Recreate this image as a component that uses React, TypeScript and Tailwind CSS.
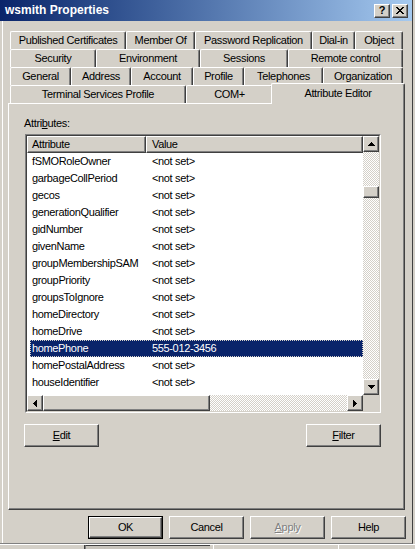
import React from "react";

type Tab = { label: string; w: string; selected?: boolean };

const tabRows: Tab[][] = [
  [
    { label: "Published Certificates", w: "w-[116px]" },
    { label: "Member Of", w: "w-[69px]" },
    { label: "Password Replication", w: "w-[117px]" },
    { label: "Dial-in", w: "w-[43px]" },
    { label: "Object", w: "w-[48px]" },
  ],
  [
    { label: "Security", w: "w-[86px]" },
    { label: "Environment", w: "w-[104px]" },
    { label: "Sessions", w: "w-[88px]" },
    { label: "Remote control", w: "w-[115px]" },
  ],
  [
    { label: "General", w: "w-[61px]" },
    { label: "Address", w: "w-[60px]" },
    { label: "Account", w: "w-[62px]" },
    { label: "Profile", w: "w-[51px]" },
    { label: "Telephones", w: "w-[79px]" },
    { label: "Organization", w: "w-[80px]" },
  ],
  [
    { label: "Terminal Services Profile", w: "w-[176px]" },
    { label: "COM+", w: "w-[87px]" },
    { label: "Attribute Editor", w: "w-[134px]", selected: true },
  ],
];

const attributes: [string, string][] = [
  ["fSMORoleOwner", "<not set>"],
  ["garbageCollPeriod", "<not set>"],
  ["gecos", "<not set>"],
  ["generationQualifier", "<not set>"],
  ["gidNumber", "<not set>"],
  ["givenName", "<not set>"],
  ["groupMembershipSAM", "<not set>"],
  ["groupPriority", "<not set>"],
  ["groupsToIgnore", "<not set>"],
  ["homeDirectory", "<not set>"],
  ["homeDrive", "<not set>"],
  ["homePhone", "555-012-3456"],
  ["homePostalAddress", "<not set>"],
  ["houseIdentifier", "<not set>"],
];

const raised =
  "border border-t-white border-l-white border-r-[#404040] border-b-[#404040] shadow-[inset_-1px_-1px_#808080]";

const dither =
  "bg-[repeating-conic-gradient(#d4d0c8_0%_25%,#ffffff_0%_50%)] bg-[length:2px_2px]";

function Arrow({ dir }: { dir: "up" | "down" | "left" | "right" }) {
  const paths = {
    up: "M3 0h1v1H3z M2 1h3v1H2z M1 2h5v1H1z M0 3h7v1H0z",
    down: "M0 0h7v1H0z M1 1h5v1H1z M2 2h3v1H2z M3 3h1v1H3z",
    left: "M3 0h1v7H3z M2 1h1v5H2z M1 2h1v3H1z M0 3h1v1H0z",
    right: "M0 0h1v7H0z M1 1h1v5H1z M2 2h1v3H2z M3 3h1v1H3z",
  };
  const horiz = dir === "up" || dir === "down";
  return (
    <svg
      width={horiz ? 7 : 4}
      height={horiz ? 4 : 7}
      shapeRendering="crispEdges"
    >
      <path d={paths[dir]} fill="#000" />
    </svg>
  );
}

function ScrollButton({ dir }: { dir: "up" | "down" | "left" | "right" }) {
  return (
    <div
      className={`${raised} flex h-[16px] w-[16px] shrink-0 items-center justify-center bg-[#d4d0c8]`}
    >
      <Arrow dir={dir} />
    </div>
  );
}

function PushButton({
  children,
  isDefault = false,
}: {
  children: React.ReactNode;
  isDefault?: boolean;
}) {
  if (isDefault) {
    return (
      <div className="h-[23px] w-[75px] border border-black">
        <div
          className={`${raised} flex h-full w-full items-center justify-center`}
        >
          {children}
        </div>
      </div>
    );
  }
  return (
    <div
      className={`${raised} flex h-[23px] w-[75px] items-center justify-center`}
    >
      {children}
    </div>
  );
}

function TabStrip() {
  return (
    <div className="mt-[10px] flex flex-col pl-[7px]">
      {tabRows.map((row, i) => (
        <div key={i} className="flex h-[18px] items-start">
          {row.map((t) =>
            t.selected ? (
              <div
                key={t.label}
                className={`${t.w} relative z-10 -mt-[2px] -ml-[2px] flex h-[21px] items-start justify-center rounded-t-[2px] border-t border-l border-r border-t-white border-l-white border-r-[#404040] bg-[#d4d0c8] pt-[3px] shadow-[inset_-1px_0_#808080]`}
              >
                {t.label}
              </div>
            ) : (
              <div
                key={t.label}
                className={`${t.w} flex h-[18px] items-start justify-center rounded-t-[2px] border-t border-l border-r border-t-white border-l-white border-r-[#404040] pt-[2px] shadow-[inset_-1px_0_#808080]`}
              >
                {t.label}
              </div>
            )
          )}
        </div>
      ))}
    </div>
  );
}

function AttributeList() {
  return (
    <div className="ml-[1px] mt-[4px] h-[279px] w-[356px] border border-t-[#808080] border-l-[#808080] border-r-white border-b-white">
      <div className="flex h-full w-full flex-col border border-t-[#404040] border-l-[#404040] border-r-[#d4d0c8] border-b-[#d4d0c8] bg-white">
        <div className="flex min-h-0 flex-1">
          <div className="flex min-w-0 flex-1 flex-col">
            <div className="flex h-[17px] shrink-0 bg-[#d4d0c8]">
              <div
                className={`${raised} flex w-[119px] items-center pl-[4px]`}
              >
                Attribute
              </div>
              <div className={`${raised} flex flex-1 items-center pl-[5px]`}>
                Value
              </div>
            </div>
            <div className="flex flex-col">
              {attributes.map(([name, value]) => {
                const sel = name === "homePhone";
                return (
                  <div
                    key={name}
                    className={`ml-[3px] flex h-[17px] items-center ${
                      sel
                        ? "bg-[#0a246a] text-white outline-1 -outline-offset-1 outline-dotted outline-[#d4d0c8]"
                        : ""
                    }`}
                  >
                    <div className="w-[116px] pl-[2px]">{name}</div>
                    <div className="pl-[6px]">{value}</div>
                  </div>
                );
              })}
            </div>
          </div>
          <div className={`flex w-[16px] flex-col ${dither}`}>
            <ScrollButton dir="up" />
            <div className="flex-1">
              <div
                className={`${raised} mt-[34px] h-[12px] w-[16px] bg-[#d4d0c8]`}
              />
            </div>
            <ScrollButton dir="down" />
          </div>
        </div>
        <div className="flex h-[16px] shrink-0">
          <div className={`flex flex-1 ${dither}`}>
            <ScrollButton dir="left" />
            <div className={`${raised} h-[16px] w-[167px] bg-[#d4d0c8]`} />
            <div className="flex-1" />
            <ScrollButton dir="right" />
          </div>
          <div className="h-[16px] w-[16px] bg-[#d4d0c8]" />
        </div>
      </div>
    </div>
  );
}

export default function App() {
  return (
    <div className="flex h-[549px] w-[415px] flex-col overflow-hidden bg-[#d4d0c8] font-['Liberation_Sans',Arial,sans-serif] text-[11px] leading-[13px] tracking-[-0.35px] text-black">
      <div className="flex h-[544px] w-[413px] shrink-0 flex-col border-r border-b border-r-[#404040] border-b-[#808080]">
        <div className="flex h-[21px] shrink-0 items-center justify-between bg-gradient-to-r from-[#0a246a] to-[#a6caf0] pr-[4px] pl-[5px]">
          <span className="text-[12px] font-bold tracking-normal text-white">
            wsmith Properties
          </span>
          <div className="flex gap-[2px]">
            <div
              className={`${raised} flex h-[14px] w-[16px] items-center justify-center bg-[#d4d0c8] text-[11px] font-bold leading-none`}
            >
              ?
            </div>
            <div
              className={`${raised} flex h-[14px] w-[16px] items-center justify-center bg-[#d4d0c8]`}
            >
              <svg width="8" height="7" shapeRendering="crispEdges">
                <path
                  d="M0 0h2v1H0z M6 0h2v1H6z M1 1h2v1H1z M5 1h2v1H5z M2 2h4v1H2z M3 3h2v1H3z M2 4h4v1H2z M1 5h2v1H1z M5 5h2v1H5z M0 6h2v1H0z M6 6h2v1H6z"
                  fill="#000"
                />
              </svg>
            </div>
          </div>
        </div>

        <div className="ml-[2px] flex flex-1 flex-col border-l border-l-white">
          <TabStrip />

          <div className="ml-[5px] h-[407px] w-[397px] border border-t-white border-l-white border-r-[#404040] border-b-[#404040]">
            <div className="flex h-full w-full flex-col border-r border-b border-r-[#808080] border-b-[#808080] pt-[13px] pl-[15px]">
              <div>
                Attri<span className="underline">b</span>utes:
              </div>
              <AttributeList />
              <div className="mt-[11px] flex w-[357px] justify-between">
                <PushButton>
                  <span>
                    <span className="underline">E</span>dit
                  </span>
                </PushButton>
                <PushButton>
                  <span>
                    <span className="underline">F</span>ilter
                  </span>
                </PushButton>
              </div>
            </div>
          </div>

          <div className="mt-[6px] flex justify-end gap-[6px] pr-[6px]">
            <PushButton isDefault>OK</PushButton>
            <PushButton>Cancel</PushButton>
            <PushButton>
              <span className="text-[#808080] [text-shadow:1px_1px_#ffffff]">
                <span className="underline">A</span>pply
              </span>
            </PushButton>
            <PushButton>Help</PushButton>
          </div>
        </div>
      </div>

      <div className="flex flex-1 border-t border-t-white">
        <div className="w-[85px] border-r border-r-[#404040]" />
        <div className="w-[125px] border-t border-l border-t-[#404040] border-l-[#808080] bg-[#c8c4bc]" />
        <div className="ml-[3px] w-[122px] border-l border-l-white" />
        <div className="ml-[3px] flex-1 border-l border-l-white" />
      </div>
    </div>
  );
}
